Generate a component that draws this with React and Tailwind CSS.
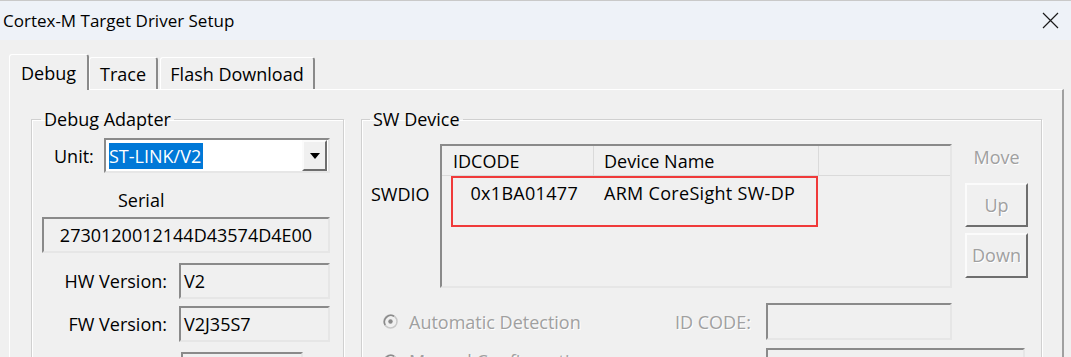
import React from "react";

const sunken =
  "border-2 border-t-[#8a8a8a] border-l-[#8a8a8a] border-r-[#e6e6e6] border-b-[#e6e6e6]";
const raised =
  "border-2 border-t-[#fbfbfb] border-l-[#fbfbfb] border-r-[#6e6e6e] border-b-[#6e6e6e]";
const engraved = "text-[#a0a0a0] [text-shadow:1px_1px_0_#ffffff]";

const ReadBox = ({ className = "", children }) => (
  <div className={`${sunken} bg-[#f0f0f0] h-[36px] flex items-center ${className}`}>{children}</div>
);

const Radio = () => (
  <svg width="15" height="15" viewBox="0 0 15 15">
    <circle cx="7.5" cy="7.5" r="6.5" fill="#f0f0f0" stroke="#c8c8c8" strokeWidth="1.5" />
    <path d="M2.2 11 A6.5 6.5 0 0 1 11 2.2" fill="none" stroke="#8a8a8a" strokeWidth="1.6" />
    <circle cx="7.5" cy="7.5" r="2.2" fill="#8a8a8a" />
  </svg>
);

export default function App() {
  return (
    <div className="w-[1071px] h-[357px] overflow-hidden bg-[#f0f0f0] text-black font-['Open_Sans',sans-serif] text-[18px]">
      {/* title bar */}
      <div className="h-[40px] bg-[#eef2f8] border-t border-[#c9c9c9] flex items-center justify-between pl-[3px] pr-[12px]">
        <span className="text-[17px] leading-[22px]">Cortex-M Target Driver Setup</span>
        <svg width="17" height="17" viewBox="0 0 17 17">
          <path d="M1 1 L16 16 M16 1 L1 16" stroke="#1a1a1a" strokeWidth="1.2" />
        </svg>
      </div>

      <div className="pl-[9px] pr-[7px] pt-[14px]">
        {/* tabs */}
        <div className="flex items-end h-[35px]">
          <div className="relative z-10 w-[80px] h-[36px] -mb-px bg-[#f0f0f0] border-t border-l border-white border-r-2 border-r-[#8a8a8a] rounded-t-[3px] flex items-center justify-center leading-[22px]">
            Debug
          </div>
          <div className="w-[69px] h-[32px] border-t border-l border-white border-r-2 border-r-[#8a8a8a] rounded-t-[3px] flex items-center justify-center leading-[22px]">
            Trace
          </div>
          <div className="ml-[2px] w-[155px] h-[32px] border-t border-l border-white border-r-2 border-r-[#8a8a8a] rounded-t-[3px] flex items-center justify-center leading-[22px]">
            Flash Download
          </div>
        </div>

        {/* tab panel */}
        <div className="h-[300px] border-t border-l border-white border-r-2 border-r-[#a0a0a0] flex items-start pl-[21px] gap-[17px]">
          {/* Debug Adapter */}
          <fieldset className="mt-[18px] w-[313px] h-[290px] border border-[#d0d0d0] [box-shadow:inset_1px_1px_0_#fff,1px_1px_0_#fff]">
            <legend className="ml-[9px] px-[3px] leading-[22px]">Debug Adapter</legend>

            <div className="mt-[8px] flex items-center">
              <span className="pl-[22px] w-[72px] leading-[22px]">Unit:</span>
              <div className={`${sunken} w-[226px] h-[35px] bg-white flex items-center justify-between pl-[3px] pr-[1px]`}>
                <span className="bg-[#0078d7] text-white leading-[26px] pr-[2px]">ST-LINK/V2</span>
                <div className={`${raised} w-[25px] h-[31px] bg-[#f0f0f0] flex items-center justify-center`}>
                  <svg width="10" height="6" viewBox="0 0 10 6">
                    <path d="M0 0 H10 L5 6 Z" fill="#000" />
                  </svg>
                </div>
              </div>
            </div>

            <div className="mt-[16px] ml-[86px] leading-[22px]">Serial</div>
            <ReadBox className="mt-[6px] ml-[10px] w-[288px] justify-center">
              2730120012144D43574D4E00
            </ReadBox>

            <div className="mt-[10px] flex items-center">
              <span className="w-[135px] text-right leading-[22px]">HW Version:</span>
              <ReadBox className="ml-[12px] w-[151px] pl-[3px]">V2</ReadBox>
            </div>
            <div className="mt-[7px] flex items-center">
              <span className="w-[135px] text-right leading-[22px]">FW Version:</span>
              <ReadBox className="ml-[12px] w-[151px] pl-[3px]">V2J35S7</ReadBox>
            </div>
            <ReadBox className="mt-[10px] ml-[149px] w-[122px]" />
          </fieldset>

          {/* SW Device */}
          <fieldset className="mt-[18px] w-[681px] h-[290px] border border-[#d0d0d0] [box-shadow:inset_1px_1px_0_#fff,1px_1px_0_#fff]">
            <legend className="ml-[8px] px-[3px] leading-[22px]">SW Device</legend>

            <div className="mt-[14px] flex items-start">
              <span className="ml-[9px] mt-[39px] w-[69px] leading-[22px]">SWDIO</span>

              <div className={`${sunken} relative w-[512px] h-[144px] bg-[#f0f0f0]`}>
                <div className="flex h-[30px] border-b border-[#dadada] leading-[22px] items-center">
                  <div className="w-[152px] h-full border-r border-[#dadada] pl-[11px] flex items-center">IDCODE</div>
                  <div className="w-[225px] h-full border-r border-[#dadada] pl-[10px] flex items-center">Device Name</div>
                </div>
                <div className="flex mt-[6px] leading-[22px] tracking-[0.3px]">
                  <div className="w-[152px] text-right pr-[16px]">0x1BA01477</div>
                  <div className="pl-[10px]">ARM CoreSight SW-DP</div>
                </div>
                {/* highlight annotation */}
                <div className="absolute left-[9px] top-[30px] w-[367px] h-[51px] border-2 border-[#f03a3a]" />
              </div>

              <div className="ml-[13px] w-[63px] flex flex-col items-center">
                <span className={`mt-[2px] leading-[22px] ${engraved}`}>Move</span>
                <div className={`${raised} mt-[15px] w-[63px] h-[44px] flex items-center justify-center ${engraved}`}>Up</div>
                <div className={`${raised} mt-[6px] w-[63px] h-[45px] flex items-center justify-center ${engraved}`}>Down</div>
              </div>
            </div>

            <div className="mt-[15px] flex items-center h-[37px]">
              <div className="ml-[21px] w-[292px] flex items-center">
                <Radio />
                <span className={`ml-[11px] leading-[22px] ${engraved}`}>Automatic Detection</span>
              </div>
              <span className={`w-[91px] leading-[22px] ${engraved}`}>ID CODE:</span>
              <div className={`${sunken} w-[186px] h-[37px] bg-[#f0f0f0]`} />
            </div>

            <div className="mt-[8px] flex items-start h-[37px]">
              <div className="ml-[21px] w-[383px] mt-[2px] flex items-center">
                <Radio />
                <span className={`ml-[11px] leading-[22px] ${engraved}`}>Manual Configuration</span>
              </div>
              <div className={`${sunken} w-[259px] h-[37px] bg-[#f0f0f0]`} />
            </div>
          </fieldset>
        </div>
      </div>
    </div>
  );
}
